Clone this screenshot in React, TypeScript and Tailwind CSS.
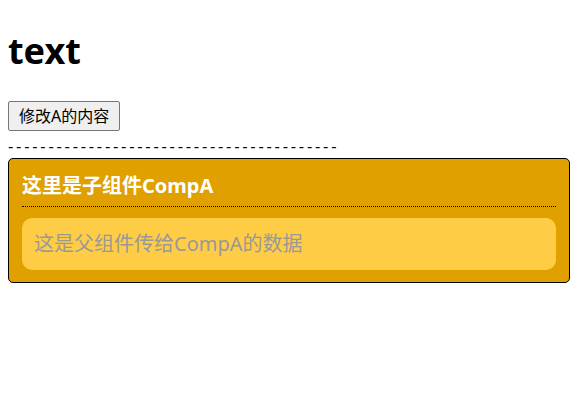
import React from "react";

const font = { fontFamily: '"Noto Sans", "Noto Sans CJK SC", sans-serif' };

function CompA({ content }: { content: string }) {
  return (
    <div className="rounded-[5px] border border-black bg-[#dfa000] px-[13px] pt-[13px] pb-[12px]">
      {/* Title */}
      <div className="border-b border-dotted border-black pb-[6px] text-[20px] font-bold leading-[28px] text-white">
        这里是子组件CompA
      </div>

      {/* Data from parent */}
      <div className="mt-[11px] rounded-[10px] bg-[#ffcc46] px-[12px] py-[12px] text-[20px] leading-[28px] text-[#999999]">
        {content}
      </div>
    </div>
  );
}

export default function App() {
  return (
    <div className="px-2 text-black" style={font}>
      <h1 className="mt-[29px] mb-[28px] text-[36px] font-bold leading-[44px]">text</h1>

      <div>
        <button className="rounded-[2px] border border-[#767676] bg-[#efefef] px-[10px] py-[2px] text-[16px] leading-[24px] text-black">
          修改A的内容
        </button>
      </div>

      <div className="mt-[5px] text-[16px] leading-[22px] tracking-[2.75px] font-['Liberation_Sans']">
        -----------------------------------------
      </div>

      <CompA content="这是父组件传给CompA的数据" />
    </div>
  );
}
